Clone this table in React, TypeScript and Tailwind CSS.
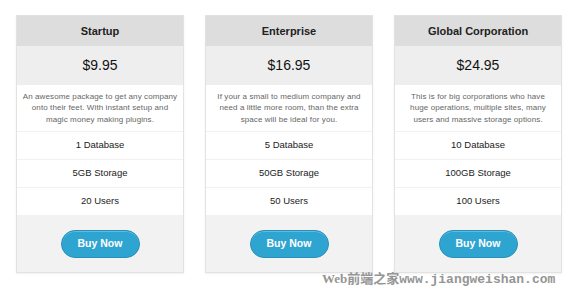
const plans = [
  {
    name: "Startup",
    price: "$9.95",
    text: ["An awesome package to get any company", "onto their feet. With instant setup and", "magic money making plugins."],
    features: ["1 Database", "5GB Storage", "20 Users"],
  },
  {
    name: "Enterprise",
    price: "$16.95",
    text: ["If your a small to medium company and", "need a little more room, than the extra", "space will be ideal for you."],
    features: ["5 Database", "50GB Storage", "50 Users"],
  },
  {
    name: "Global Corporation",
    price: "$24.95",
    text: ["This is for big corporations who have", "huge operations, multiple sites, many", "users and massive storage options."],
    features: ["10 Database", "100GB Storage", "100 Users"],
  },
]

export default function App() {
  return (
    <div
      className="relative h-[293px] w-[576px] overflow-hidden bg-white"
      style={{ fontFamily: '"Liberation Sans", Arial, sans-serif' }}
    >
      <div className="flex gap-[21px] pl-4 pt-[15px]">
        {plans.map((plan) => (
          <div
            key={plan.name}
            className="flex w-[168px] flex-col border border-[#e2e2e2] shadow-[0_1px_2px_rgba(0,0,0,0.06)]"
          >
            {/* titre */}
            <div className="flex h-[30px] items-center justify-center bg-[#dddddd] pt-px text-[11px] font-bold text-[#222]">
              {plan.name}
            </div>
            {/* prix */}
            <div className="flex h-[39px] items-center justify-center bg-[#eeeeee] text-[14px] text-[#111]">
              {plan.price}
            </div>
            {/* description */}
            <div className="flex h-[47px] flex-col items-center justify-center border-b border-[#f1f1f1] bg-white text-[8px] leading-[11.5px] tracking-[0.1px] text-[#666]">
              {plan.text.map((line) => (
                <span key={line}>{line}</span>
              ))}
            </div>
            {/* options */}
            {plan.features.map((f, i) => (
              <div
                key={f}
                className={
                  i < 2
                    ? "flex h-[28px] items-center justify-center border-b border-[#f1f1f1] bg-white text-[9.5px] text-[#222]"
                    : "flex h-[27px] items-center justify-center bg-white text-[9.5px] text-[#222]"
                }
              >
                {f}
              </div>
            ))}
            {/* bouton */}
            <div className="flex h-[57px] items-center justify-center bg-[#f2f2f2]">
              <button className="h-[28px] w-[79px] rounded-full border border-[#2690bb] bg-[#2ea4d1] text-[10.5px] font-bold text-white shadow-[inset_0_1px_0_rgba(255,255,255,0.25)]">
                Buy Now
              </button>
            </div>
          </div>
        ))}
      </div>

      {/* filigrane */}
      <div className="absolute left-[322px] top-[272px] flex items-baseline text-[13px] font-bold leading-none text-[#959595]">
        <span style={{ fontFamily: '"Liberation Serif", "Noto Sans CJK SC", serif' }}>Web前端之家</span>
        <span style={{ fontFamily: '"Liberation Mono", monospace' }}>www.jiangweishan.com</span>
      </div>
    </div>
  )
}
